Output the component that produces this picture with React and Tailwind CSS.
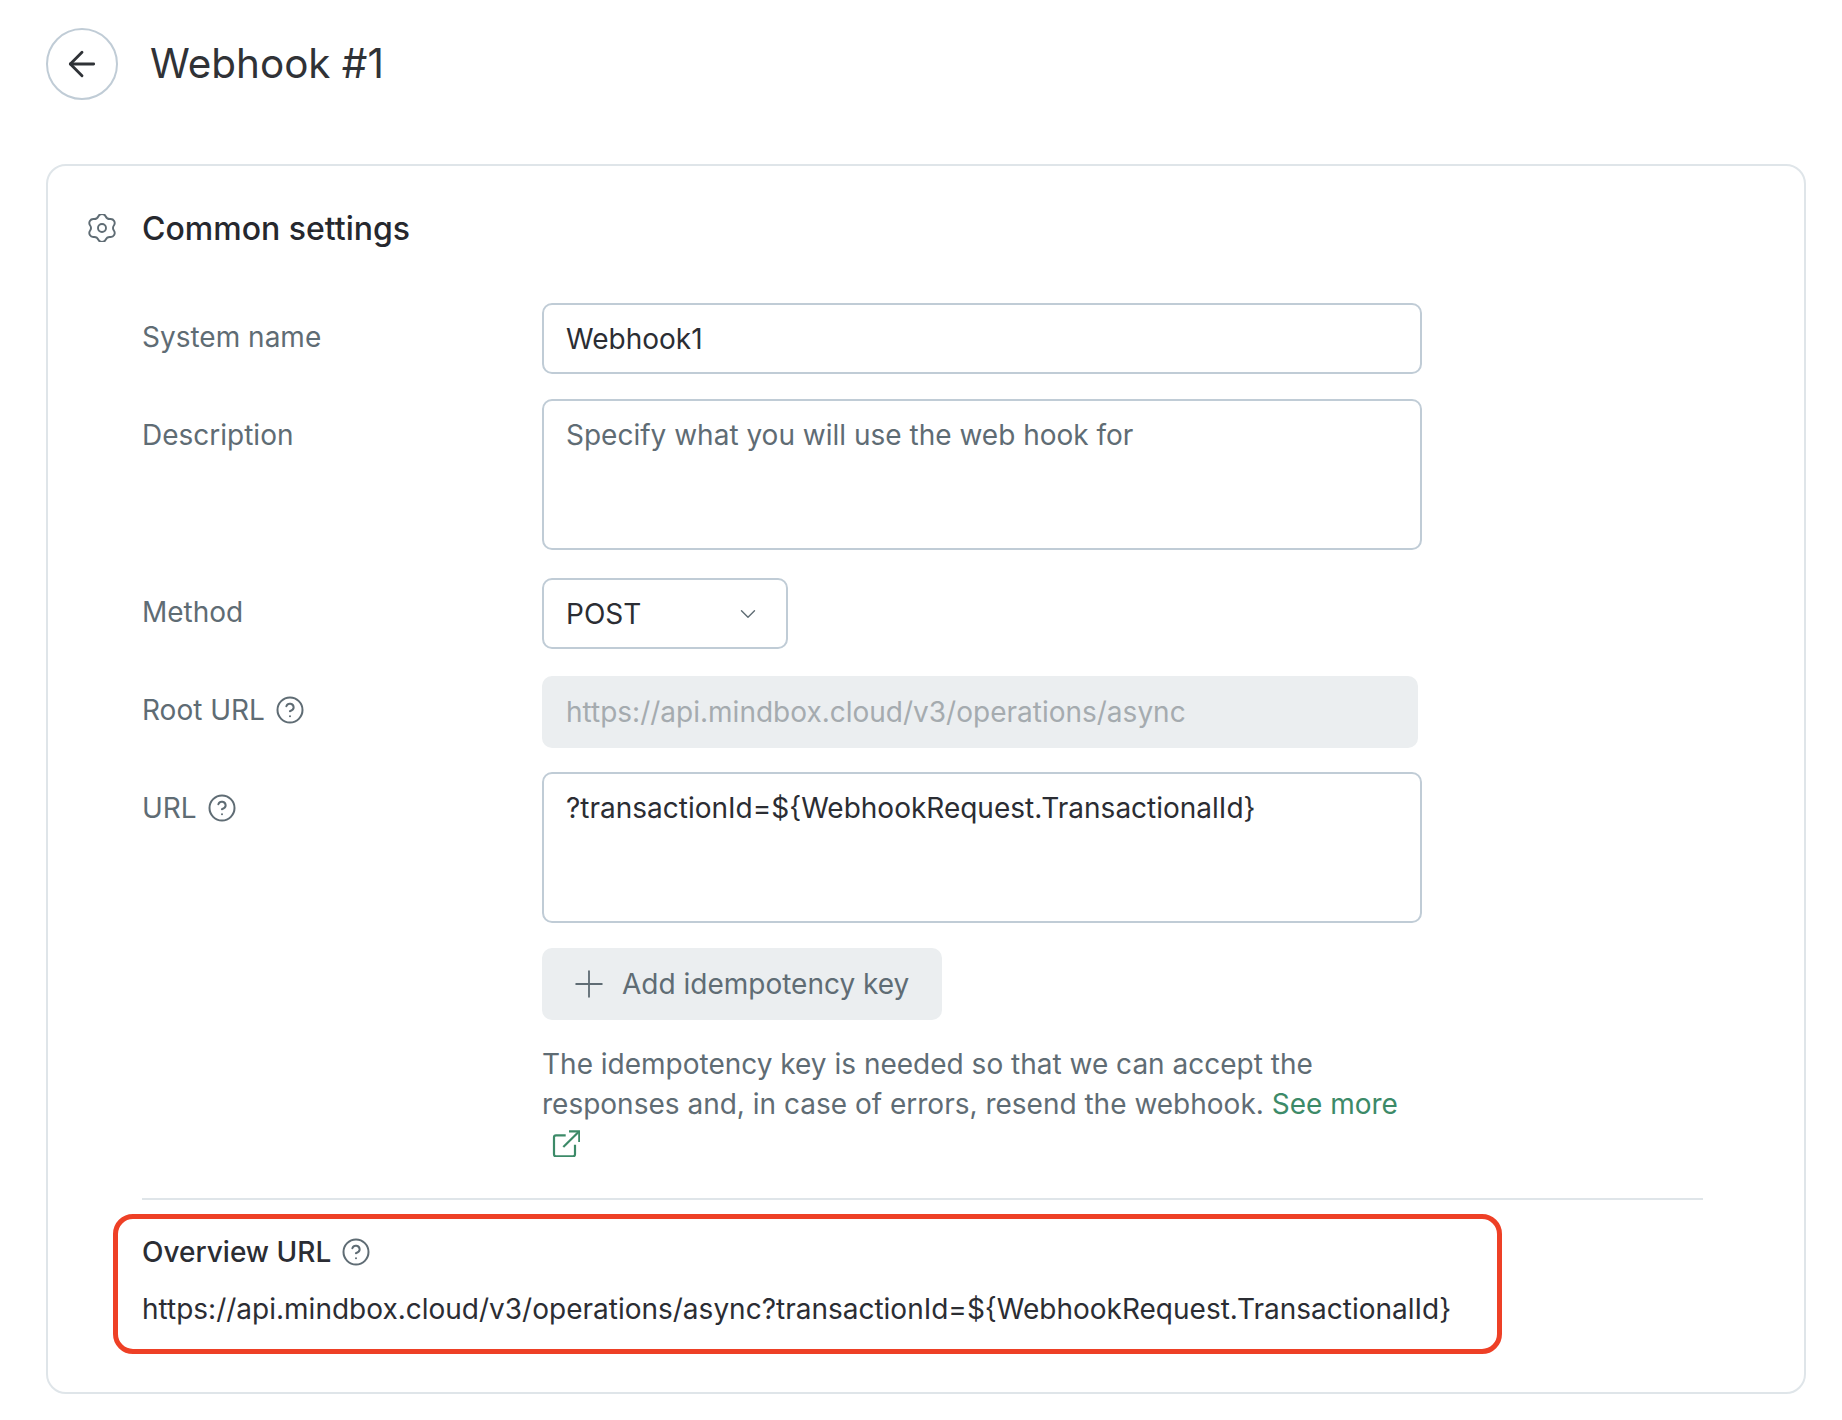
import { ArrowLeft, ChevronDown, CircleHelp, Plus } from 'lucide-react'

const labelClass = "flex items-center gap-[10px] self-start text-[28px] leading-[40px] text-[#5f6c74]"
const fieldClass = "block w-full rounded-[10px] border-2 border-[#c0ccd6] bg-white px-[22px] text-[28px] leading-[40px] text-[#2b2d33] outline-none"

const Help = () => <CircleHelp size={30} strokeWidth={1.6} className="text-[#5f6c74]" />

// six rounded lobes with a small waist between them
const point = (deg, r) => {
    const a = deg * Math.PI / 180
    return `${(14 + r * Math.sin(a)).toFixed(2)} ${(14 - r * Math.cos(a)).toFixed(2)}`
}
const gearPath = [0, 60, 120, 180, 240, 300].map((deg, i) => (
    `${i === 0 ? 'M' : 'Q'}${i === 0 ? '' : point(deg - 30, 10) + ' '}${point(deg - 17, 12.3)}A4 4 0 0 1 ${point(deg + 17, 12.3)}`
)).join('') + `Q${point(330, 10)} ${point(-17, 12.3)}Z`

const GearIcon = () => (
    <svg width="28" height="28" viewBox="0 0 28 28" fill="none" stroke="#5f6c74" strokeWidth="1.9" className="absolute left-[-54px] top-[5px]">
        <path d={gearPath} />
        <circle cx="14" cy="14" r="4" />
    </svg>
)

const ExternalIcon = () => (
    <svg width="28" height="28" viewBox="0 0 28 28" fill="none" stroke="#3c8a68" strokeWidth="2.2">
        <path d="M13.7 6.3H4a2 2 0 0 0-2 2V25.3a2 2 0 0 0 2 2H21a2 2 0 0 0 2-2V15.7" />
        <path d="M11.3 18L27 2.5" />
        <path d="M17 2.3H27.3V13" />
    </svg>
)

const App = () => {
    return (
        <div className="min-h-[1420px] bg-white font-['Inter',sans-serif]">

            <div className="flex items-center pl-[46px] pt-[28px]">
                <button className="flex h-[72px] w-[72px] items-center justify-center rounded-full border-2 border-[#c0ccd6] text-[#2f3237]">
                    <ArrowLeft size={40} strokeWidth={1.7} />
                </button>
                <h1 className="ml-[32px] text-[40.4px] leading-[50px] font-normal text-[#303236]">Webhook #1</h1>
            </div>

            <div className="ml-[46px] mt-[64px] h-[1230px] w-[1760px] rounded-[20px] border-2 border-[#dfe5e9] pl-[94px] pr-[101px] pt-[43px]">

                <div className="relative flex items-center">
                    <GearIcon />
                    <h2 className="text-[32px] leading-[40px] font-medium text-[#26282e]">Common settings</h2>
                </div>

                <div className="mt-[54px] grid grid-cols-[400px_880px]">
                    <div className={`${labelClass} pt-[14px]`}>System name</div>
                    <input readOnly defaultValue="Webhook1" className={`${fieldClass} h-[71px]`} />

                    <div className={`${labelClass} pt-[41px]`}>Description</div>
                    <textarea readOnly placeholder="Specify what you will use the web hook for" className={`${fieldClass} mt-[25px] h-[151px] resize-none pt-[14px] placeholder:text-[#5f6c74]`} />

                    <div className={`${labelClass} pt-[42px]`}>Method</div>
                    <div className="mt-[28px] flex h-[71px] w-[246px] items-center justify-between rounded-[10px] border-2 border-[#c0ccd6] pl-[22px] pr-[25px] text-[28px] text-[#2b2d33]">
                        <span>POST</span>
                        <ChevronDown size={26} strokeWidth={1.3} className="text-[#5f6c74]" />
                    </div>

                    <div className={`${labelClass} pt-[41px]`}>Root URL <Help /></div>
                    <div className="mt-[27px] flex h-[72px] w-[876px] items-center rounded-[10px] bg-[#ebeef0] pl-[24px] text-[28px] text-[#a5abaf]">https://api.mindbox.cloud/v3/operations/async</div>

                    <div className={`${labelClass} pt-[40px]`}>URL <Help /></div>
                    <textarea readOnly defaultValue="?transactionId=${WebhookRequest.TransactionalId}" className={`${fieldClass} mt-[24px] h-[151px] resize-none pt-[14px]`} />

                    <div />
                    <div>
                        <button className="mt-[25px] flex h-[72px] w-[400px] items-center rounded-[10px] bg-[#ebeef0] pl-[25px] text-[28px] text-[#5f6c74]">
                            <Plus size={44} strokeWidth={1} className="mr-[11px]" />
                            Add idempotency key
                        </button>
                        <p className="mt-[24px] text-[28px] leading-[40px] text-[#5f6c74]">
                            The idempotency key is needed so that we can accept the responses and, in case of errors, resend the webhook. <a className="text-[#3c8a68]">See more</a>
                            <span className="block pb-[7px] pl-[10px] pt-[5px]"><ExternalIcon /></span>
                        </p>
                    </div>
                </div>

                <div className="mt-[34px] h-[2px] bg-[#dfe5e9]" />

                <div className="ml-[-29px] mt-[14px] h-[140px] w-[1389px] rounded-[20px] border-[5px] border-[#ee4026] pl-[24px] pt-[13px]">
                    <div className="flex items-center gap-[10px] text-[28px] leading-[40px] font-medium text-[#2b2d33]">Overview URL <Help /></div>
                    <div className="mt-[17px] text-[28px] leading-[40px] text-[#2b2d33]">https://api.mindbox.cloud/v3/operations/async?transactionId=${'{'}WebhookRequest.TransactionalId{'}'}</div>
                </div>

            </div>
        </div>
    )
}

export default App
